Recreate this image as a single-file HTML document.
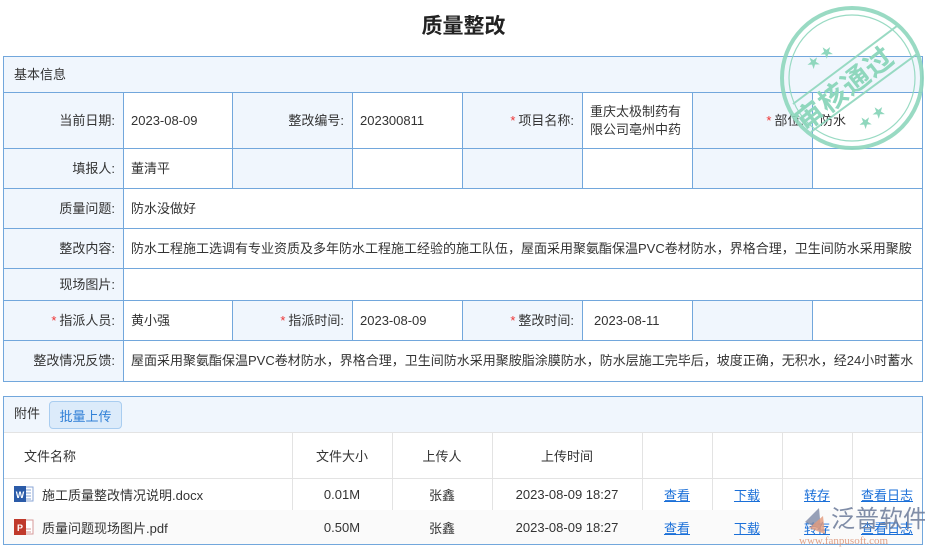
<!DOCTYPE html>
<html><head><meta charset="utf-8"><style>
*{margin:0;padding:0;box-sizing:border-box}
body{width:927px;height:548px;background:#fff;font-family:"Liberation Sans","Noto Sans CJK SC",sans-serif;font-size:13px;color:#333;position:relative;overflow:hidden}
.c{position:absolute;border-right:1px solid #72a7dc;border-bottom:1px solid #72a7dc;display:flex;align-items:center;padding:0 7px;line-height:18px;white-space:nowrap;overflow:hidden}
.l{background:#f0f6fd;justify-content:flex-end;padding-right:8px}
.s{color:#e33;margin-right:3px}
.t{position:absolute;display:flex;align-items:center;justify-content:center;border-right:1px solid #e3e3e3;border-bottom:1px solid #e3e3e3;white-space:nowrap}
a{color:#1a6fd8;text-decoration:underline}
</style></head><body>
<div style="position:absolute;left:0;top:10px;width:927px;text-align:center;font-size:21px;font-weight:bold;color:#222">质量整改</div>
<div style="position:absolute;left:3px;top:56px;width:920px;height:326px;border:1px solid #72a7dc;border-right:none;border-bottom:none"></div>
<div class="c" style="left:3px;top:56px;width:920px;height:37px;background:#f0f6fd;border-top:1px solid #72a7dc;border-left:1px solid #72a7dc;padding-left:10px">基本信息</div>
<!-- row1 -->
<div class="c l" style="left:3px;top:93px;width:121px;height:56px;border-left:1px solid #72a7dc">当前日期:</div>
<div class="c" style="left:124px;top:93px;width:109px;height:56px">2023-08-09</div>
<div class="c l" style="left:233px;top:93px;width:120px;height:56px">整改编号:</div>
<div class="c" style="left:353px;top:93px;width:110px;height:56px">202300811</div>
<div class="c l" style="left:463px;top:93px;width:120px;height:56px"><span class="s">*</span>项目名称:</div>
<div class="c" style="left:583px;top:93px;width:110px;height:56px;white-space:normal">重庆太极制药有限公司亳州中药</div>
<div class="c l" style="left:693px;top:93px;width:120px;height:56px"><span class="s">*</span>部位:</div>
<div class="c" style="left:813px;top:93px;width:110px;height:56px">防水</div>
<!-- row2 -->
<div class="c l" style="left:3px;top:149px;width:121px;height:40px;border-left:1px solid #72a7dc">填报人:</div>
<div class="c" style="left:124px;top:149px;width:109px;height:40px">董清平</div>
<div class="c l" style="left:233px;top:149px;width:120px;height:40px"></div>
<div class="c" style="left:353px;top:149px;width:110px;height:40px"></div>
<div class="c l" style="left:463px;top:149px;width:120px;height:40px"></div>
<div class="c" style="left:583px;top:149px;width:110px;height:40px"></div>
<div class="c l" style="left:693px;top:149px;width:120px;height:40px"></div>
<div class="c" style="left:813px;top:149px;width:110px;height:40px"></div>
<!-- rows -->
<div class="c l" style="left:3px;top:189px;width:121px;height:40px;border-left:1px solid #72a7dc">质量问题:</div>
<div class="c" style="left:124px;top:189px;width:799px;height:40px">防水没做好</div>
<div class="c l" style="left:3px;top:229px;width:121px;height:40px;border-left:1px solid #72a7dc">整改内容:</div>
<div class="c" style="left:124px;top:229px;width:799px;height:40px">防水工程施工选调有专业资质及多年防水工程施工经验的施工队伍，屋面采用聚氨酯保温PVC卷材防水，界格合理，卫生间防水采用聚胺</div>
<div class="c l" style="left:3px;top:269px;width:121px;height:32px;border-left:1px solid #72a7dc">现场图片:</div>
<div class="c" style="left:124px;top:269px;width:799px;height:32px"></div>
<div class="c l" style="left:3px;top:301px;width:121px;height:40px;border-left:1px solid #72a7dc"><span class="s">*</span>指派人员:</div>
<div class="c" style="left:124px;top:301px;width:109px;height:40px">黄小强</div>
<div class="c l" style="left:233px;top:301px;width:120px;height:40px"><span class="s">*</span>指派时间:</div>
<div class="c" style="left:353px;top:301px;width:110px;height:40px">2023-08-09</div>
<div class="c l" style="left:463px;top:301px;width:120px;height:40px"><span class="s">*</span>整改时间:</div>
<div class="c" style="left:583px;top:301px;width:110px;height:40px;padding-left:11px">2023-08-11</div>
<div class="c l" style="left:693px;top:301px;width:120px;height:40px"></div>
<div class="c" style="left:813px;top:301px;width:110px;height:40px"></div>
<div class="c l" style="left:3px;top:341px;width:121px;height:41px;border-left:1px solid #72a7dc">整改情况反馈:</div>
<div class="c" style="left:124px;top:341px;width:799px;height:41px">屋面采用聚氨酯保温PVC卷材防水，界格合理，卫生间防水采用聚胺脂涂膜防水，防水层施工完毕后，坡度正确，无积水，经24小时蓄水</div>

<!-- attachments -->
<div style="position:absolute;left:3px;top:396px;width:920px;height:149px;border:1px solid #72a7dc"></div>
<div style="position:absolute;left:4px;top:397px;width:918px;height:36px;background:#f0f6fd;border-bottom:1px solid #e3e3e3"></div>
<div style="position:absolute;left:14px;top:405px;line-height:18px">附件</div>
<div style="position:absolute;left:49px;top:401px;width:73px;height:28px;border:1px solid #a9cdf0;border-radius:4px;background:#dcebfa;color:#2f7fd6;display:flex;align-items:center;justify-content:center">批量上传</div>
<div class="t" style="left:4px;top:433px;width:289px;height:46px;justify-content:flex-start;padding-left:20px">文件名称</div>
<div class="t" style="left:292px;top:433px;width:101px;height:46px">文件大小</div>
<div class="t" style="left:392px;top:433px;width:101px;height:46px">上传人</div>
<div class="t" style="left:492px;top:433px;width:151px;height:46px">上传时间</div>
<div class="t" style="left:642px;top:433px;width:71px;height:46px"></div>
<div class="t" style="left:712px;top:433px;width:71px;height:46px"></div>
<div class="t" style="left:782px;top:433px;width:71px;height:46px"></div>
<div class="t" style="left:852px;top:433px;width:70px;height:46px;border-right:none"></div>

<div class="t" style="left:4px;top:478px;width:289px;height:33px;justify-content:flex-start;padding-left:10px"><svg width="20" height="18" viewBox="0 0 20 18" style="margin-right:8px"><rect x="8" y="2" width="11" height="14" fill="#fff" stroke="#8aa6d6"/><path d="M11 5h6M11 8h6M11 11h6M11 14h6" stroke="#8aa6d6"/><rect x="0" y="1" width="12" height="16" fill="#2b5ba8"/><text x="6" y="13" font-size="9" font-weight="bold" fill="#fff" text-anchor="middle" font-family="Liberation Sans">W</text></svg>施工质量整改情况说明.docx</div>
<div class="t" style="left:292px;top:478px;width:101px;height:33px">0.01M</div>
<div class="t" style="left:392px;top:478px;width:101px;height:33px">张鑫</div>
<div class="t" style="left:492px;top:478px;width:151px;height:33px">2023-08-09 18:27</div>
<div class="t" style="left:642px;top:478px;width:71px;height:33px"><a>查看</a></div>
<div class="t" style="left:712px;top:478px;width:71px;height:33px"><a>下载</a></div>
<div class="t" style="left:782px;top:478px;width:71px;height:33px"><a>转存</a></div>
<div class="t" style="left:852px;top:478px;width:70px;height:33px;border-right:none"><a>查看日志</a></div>

<div class="t" style="left:4px;top:510px;width:289px;height:34px;justify-content:flex-start;padding-left:10px;background:#fafafa;border-bottom:none"><svg width="20" height="18" viewBox="0 0 20 18" style="margin-right:8px"><rect x="8" y="2" width="11" height="14" fill="#fff" stroke="#d79a9a"/><path d="M11 11h6M11 14h6" stroke="#d79a9a"/><rect x="0" y="1" width="12" height="16" fill="#c0392b"/><text x="6" y="13" font-size="9" font-weight="bold" fill="#fff" text-anchor="middle" font-family="Liberation Sans">P</text></svg>质量问题现场图片.pdf</div>
<div class="t" style="left:292px;top:510px;width:101px;height:34px;background:#fafafa;border-bottom:none">0.50M</div>
<div class="t" style="left:392px;top:510px;width:101px;height:34px;background:#fafafa;border-bottom:none">张鑫</div>
<div class="t" style="left:492px;top:510px;width:151px;height:34px;background:#fafafa;border-bottom:none">2023-08-09 18:27</div>
<div class="t" style="left:642px;top:510px;width:71px;height:34px;background:#fafafa;border-bottom:none"><a>查看</a></div>
<div class="t" style="left:712px;top:510px;width:71px;height:34px;background:#fafafa;border-bottom:none"><a>下载</a></div>
<div class="t" style="left:782px;top:510px;width:71px;height:34px;background:#fafafa;border-bottom:none"><a>转存</a></div>
<div class="t" style="left:852px;top:510px;width:70px;height:34px;border-right:none;background:#fafafa;border-bottom:none"><a>查看日志</a></div>

<!-- watermark logo -->
<svg style="position:absolute;left:795px;top:500px" width="130" height="48" viewBox="0 0 130 48">
<path d="M10 22 L24 8 L26 30 Z" fill="#7e8aa6" opacity=".8"/><path d="M14 28 L28 16 L30 34 Z" fill="#e49a7a" opacity=".8"/>
<text x="36" y="27" font-size="24" fill="#6b7a99" opacity=".85" font-family="Noto Sans CJK SC,sans-serif">泛普软件</text>
<text x="4" y="44" font-size="11" fill="#d98a6a" opacity=".8" font-family="Liberation Serif,serif">www.fanpusoft.com</text>
</svg>
<!-- stamp -->
<svg style="position:absolute;left:775px;top:0px" width="150" height="152" viewBox="0 0 150 152">
<g fill="none" stroke="#8fd7bd" opacity=".9">
<circle cx="77" cy="78" r="70" stroke-width="4"/>
<circle cx="77" cy="78" r="63" stroke-width="1.2"/>
<path d="M18 104 L122 26" stroke-width="2"/>
<path d="M36 132 L142 54" stroke-width="2"/>
</g>
<g fill="#8fd7bd"><text x="0" y="0" font-size="28" font-weight="bold" transform="translate(30,132) rotate(-38)" font-family="Noto Sans CJK SC,sans-serif" letter-spacing="1">审核通过</text>
<text transform="translate(36,70) rotate(-38)" font-size="13">★ ★</text><text transform="translate(88,130) rotate(-38)" font-size="13">★ ★</text></g>
</svg>
</body></html>
